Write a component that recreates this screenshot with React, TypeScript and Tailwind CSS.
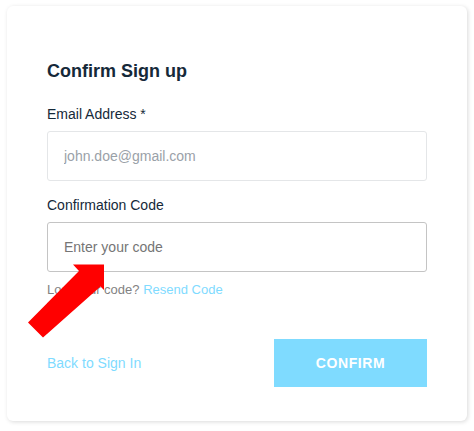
import React from "react";

export default function App() {
  return (
    <div
      className="relative w-[474px] h-[431px] bg-white overflow-hidden"
      style={{ fontFamily: '"Liberation Sans", Arial, Helvetica, sans-serif' }}
    >
      <div className="pt-[6px] pl-[7px]">
        <div className="w-[460px] h-[415px] bg-white rounded-[6px] shadow-[1px_1px_4px_0_rgba(0,0,0,0.15)] px-[40px] pt-[55px]">
          <h1 className="text-[18px] leading-[20px] font-bold text-[#152939]">Confirm Sign up</h1>

          <label className="block mt-[25px] text-[14px] leading-[16px] text-[#152939]">Email Address *</label>
          <input
            readOnly
            placeholder="john.doe@gmail.com"
            className="block mt-[9px] w-[380px] h-[50px] px-[16px] text-[14px] border border-[#e4e6e8] rounded-[3px] bg-white outline-none placeholder:text-[#9aa1a8]"
          />

          <label className="block mt-[16px] text-[14px] leading-[16px] text-[#152939]">Confirmation Code</label>
          <input
            placeholder="Enter your code"
            className="block mt-[9px] w-[380px] h-[50px] px-[16px] text-[14px] border border-[#c4c4c4] rounded-[3px] bg-white outline-none placeholder:text-[#757575]"
          />

          <div className="mt-[10px] text-[13px] leading-[16px] text-[#828282]">
            Lost your code? <span className="text-[#7fdbff]">Resend Code</span>
          </div>

          <div className="mt-[41px] flex items-center justify-between">
            <span className="text-[14px] leading-[16px] text-[#7fdbff]">Back to Sign In</span>
            <button className="w-[153px] h-[48px] bg-[#7fdbff] text-white text-[14px] font-bold tracking-[0.6px] uppercase">
              Confirm
            </button>
          </div>
        </div>
      </div>

      <svg
        className="absolute top-0 left-0 pointer-events-none"
        width="474"
        height="431"
        viewBox="0 0 474 431"
      >
        <polygon
          points="104,264.5 104,290 100.5,286.5 43,337.5 28,322.5 79,271 73,264.5"
          fill="#ff0000"
        />
      </svg>
    </div>
  );
}
